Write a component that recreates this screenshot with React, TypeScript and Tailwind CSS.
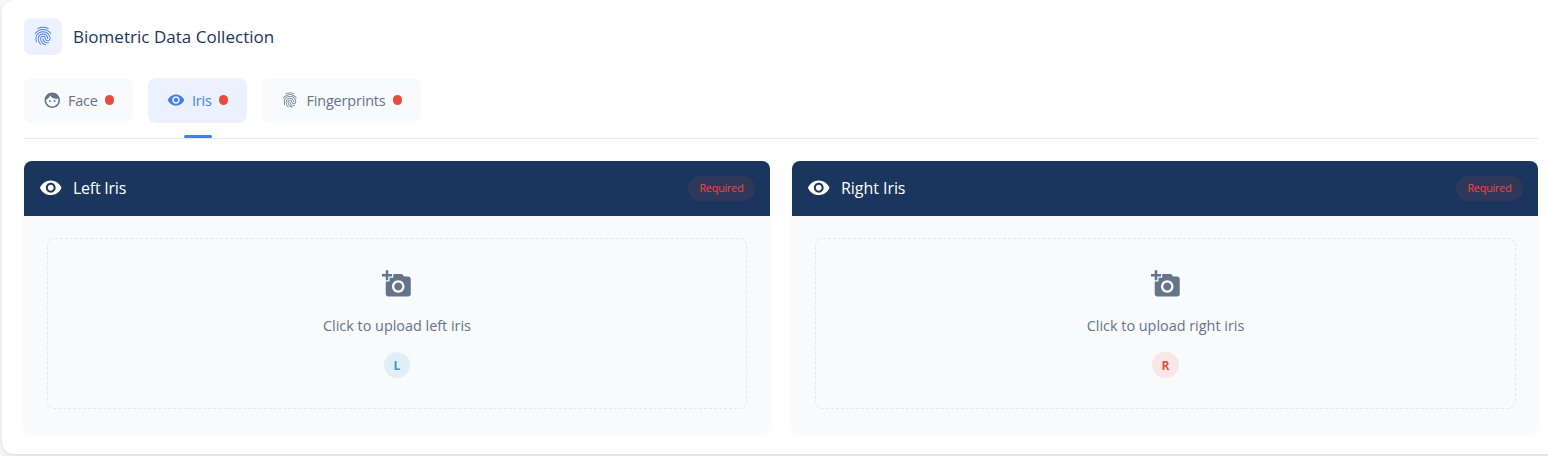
import type { ReactNode } from "react";
import { MdAddAPhoto, MdFace, MdFingerprint, MdVisibility } from "react-icons/md";

type TabProps = { icon: ReactNode; label: string; width: string; labelClass: string; active?: boolean };

function Tab({ icon, label, width, labelClass, active }: TabProps) {
  return (
    <button
      className={`relative flex h-[45px] items-center rounded-lg pl-[19px] ${width} ${
        active ? "bg-[#ebf1fe] text-[#4580e8]" : "bg-[#f8fafc] text-[#64748b]"
      }`}
    >
      {icon}
      <span className={`whitespace-nowrap text-[14.4px] leading-5 ${labelClass}`}>{label}</span>
      <span className="absolute top-[17px] right-[19px] h-[10px] w-[9px] rounded-full bg-[#e74c3c]" />
      {active && <span className="absolute -bottom-[15px] left-[36px] h-[3px] w-[28px] rounded-[2px] bg-[#4580e8]" />}
    </button>
  );
}

type CardProps = {
  title: string;
  titleClass: string;
  prompt: string;
  boxClass: string;
  letter: string;
  badge: string;
};

function IrisCard({ title, titleClass, prompt, boxClass, letter, badge }: CardProps) {
  return (
    <section className="h-[271px] w-[746px] overflow-hidden rounded-lg bg-[#f8fafc] shadow-[0_2px_6px_rgba(0,0,0,0.04)]">
      <header className="flex h-[55px] items-center bg-[#1a365d] pr-[15px] pl-[15px] text-white">
        <MdVisibility className="mb-[1px] h-[23.5px] w-[23.5px]" />
        <h2 className={`mb-[2px] ml-[10.5px] text-[16px] leading-6 ${titleClass}`}>{title}</h2>
        <span className="ml-auto flex h-[25px] w-[67px] items-center justify-center rounded-full bg-[#2f385a] text-[10.8px] tracking-[-0.2px] text-[#e74c3c]">
          Required
        </span>
      </header>
      <div className="px-[23px] pt-[22px]">
        <div
          className={`flex h-[171px] flex-col items-center rounded-lg border border-dashed border-[#e2e8f0] pt-[30px] text-[#64748b] ${boxClass}`}
        >
          <MdAddAPhoto className="h-[30px] w-[30px]" />
          <p className="mt-[17px] text-[14.4px] leading-5">{prompt}</p>
          <span className={`mt-[16px] flex h-[26px] items-center justify-center rounded-full pt-px text-[12px] font-bold ${badge}`}>
            {letter}
          </span>
        </div>
      </div>
    </section>
  );
}

export default function App() {
  return (
    <div className="h-[456px] w-full overflow-hidden bg-[#f7f7f7] pl-[2px] font-['Open_Sans','Noto_Sans',sans-serif]">
      <main className="h-[454px] w-[1560px] rounded-l-[12px] bg-white pt-[18px] pl-[22px] shadow-[0_2px_4px_rgba(0,0,0,0.1)]">
        <div className="flex h-[37px] items-center">
          <span className="flex h-[37px] w-[38px] items-center justify-center rounded-lg bg-[#ebf1fe] pb-[2px] text-[#4580e8]">
            <MdFingerprint className="h-[22px] w-[22px]" />
          </span>
          <h1 className="ml-[11px] text-[17px] leading-6 tracking-[0.03px] text-[#1a365d]">Biometric Data Collection</h1>
        </div>
        <nav className="mt-[23px] flex h-[61px] w-[1514px] gap-[15px] border-b border-[#e2e8f0]">
          <Tab
            icon={<MdFace className="h-[18.5px] w-[18.5px]" />}
            label="Face"
            width="w-[109px]"
            labelClass="ml-[6.5px] tracking-[-0.2px]"
          />
          <Tab
            icon={<MdVisibility className="mb-px h-[18px] w-[18px]" />}
            label="Iris"
            width="w-[99px]"
            labelClass="ml-[7px] tracking-[-0.2px]"
            active
          />
          <Tab
            icon={<MdFingerprint className="mb-px h-[18px] w-[18px]" />}
            label="Fingerprints"
            width="w-[159px]"
            labelClass="ml-[7.5px] tracking-[-0.15px]"
          />
        </nav>
        <div className="mt-[22px] flex gap-[22px]">
          <IrisCard
            title="Left Iris"
            titleClass="tracking-[-0.25px]"
            prompt="Click to upload left iris"
            boxClass="w-[700px]"
            letter="L"
            badge="w-[26px] bg-[#e0eef8] text-[#3f94c8]"
          />
          <IrisCard
            title="Right Iris"
            titleClass="tracking-[-0.05px]"
            prompt="Click to upload right iris"
            boxClass="w-[701px]"
            letter="R"
            badge="w-[27px] bg-[#f7e7e7] text-[#dc5349]"
          />
        </div>
      </main>
    </div>
  );
}
